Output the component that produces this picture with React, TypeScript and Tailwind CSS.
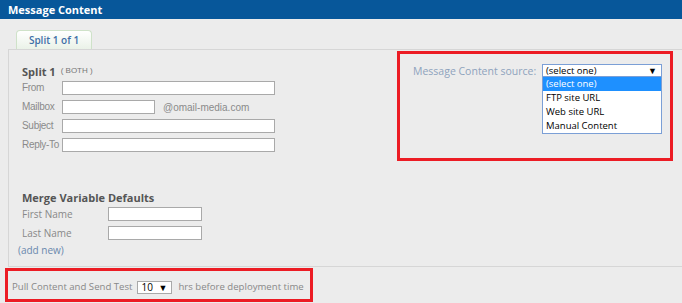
import React from "react";

const open = "font-['Open_Sans',sans-serif]";
const arial = "font-['Liberation_Sans',Arial,sans-serif]";

function Field({ label, wide = true, suffix }: { label: string; wide?: boolean; suffix?: string }) {
  return (
    <div className="flex items-center h-[14px]">
      <span className={`${arial} w-[40px] shrink-0 whitespace-nowrap text-[10px] tracking-[-0.3px] text-[#8a8a8a] leading-none`}>{label}</span>
      <input
        className={`h-[14px] shrink-0 ${wide ? "w-[213px]" : "w-[93px]"} bg-white border border-[#a9a9a9] outline-none`}
      />
      {suffix && <span className={`${arial} ml-[8px] whitespace-nowrap text-[10px] text-[#8a8a8a]`}>{suffix}</span>}
    </div>
  );
}

function MergeField({ label }: { label: string }) {
  return (
    <div className="flex items-center h-[14px]">
      <span className={`${open} w-[86px] shrink-0 text-[10px] text-[#888] leading-none`}>{label}</span>
      <input className="h-[14px] w-[94px] shrink-0 bg-white border border-[#a9a9a9] outline-none" />
    </div>
  );
}

export default function App() {
  return (
    <div className={`${open} w-[682px] h-[303px] bg-[#ececec] overflow-hidden`}>
      <div className="h-[19px] bg-[#07579a] flex items-center pl-[8px]">
        <span className="text-white text-[11px] font-bold leading-none">Message Content</span>
      </div>

      <div className="pt-[11px] pl-[16px] flex">
        <div className="w-[76px] h-[19px] rounded-t-[4px] border border-b-0 border-[#cfe2c9] bg-gradient-to-b from-white to-[#eaf2e8] flex items-center justify-center">
          <span className="text-[10px] font-semibold text-[#3e6fa7] leading-none">Split 1 of 1</span>
        </div>
      </div>

      <div className="ml-[8px] border-l border-t border-b border-[#d6d6d6] grid grid-cols-[300px_1fr]">
        <div className="pl-[13px] pt-[14px] pb-[10px]">
          <div className="h-[14px] flex items-center">
            <span className="text-[11px] font-bold text-[#555] leading-none">Split 1</span>
            <span className={`${arial} ml-[5px] text-[8px] text-[#777] leading-none`}>( BOTH )</span>
          </div>
          <div className="mt-[3px] flex flex-col gap-[5px]">
            <Field label="From" />
            <Field label="Mailbox" wide={false} suffix="@omail-media.com" />
            <Field label="Subject" />
            <Field label="Reply-To" />
          </div>
          <div className="mt-[38px] h-[14px] flex items-center">
            <span className="text-[11px] font-bold text-[#555] leading-none">Merge Variable Defaults</span>
          </div>
          <div className="mt-[3px] flex flex-col gap-[5px]">
            <MergeField label="First Name" />
            <MergeField label="Last Name" />
          </div>
          <div className="mt-[4px] -ml-[4px] h-[12px] flex items-center">
            <span className="text-[10px] text-[#6a88ad] leading-none">(add new)</span>
          </div>
        </div>

        <div className="pl-[88px] pr-[9px] pt-[1px]">
          <div className="h-[110px] border-[3px] border-[#ec1c24] pl-[13px] pr-[8px] pt-[10px] flex items-start justify-between">
            <span className="mt-[1px] whitespace-nowrap text-[10.5px] text-[#8ea3bd] leading-[12px]">Message Content source:</span>
            <div className="relative shrink-0 w-[120px]">
              <div className="w-[120px] h-[13px] border border-[#7b9fd6] bg-white flex items-center justify-between pl-[3px] pr-[4px]">
                <span className="text-[9.5px] text-black leading-none">(select one)</span>
                <span className="text-[9px] text-black leading-none">▼</span>
              </div>
              <div className="absolute left-0 top-[12px] w-[120px] border border-[#7b9fd6] bg-white flex flex-col">
                <div className="h-[14px] bg-[#1e90ff] text-white text-[9.5px] pl-[3px] flex items-center leading-none">(select one)</div>
                <div className="h-[14px] text-black text-[9.5px] pl-[3px] flex items-center leading-none">FTP site URL</div>
                <div className="h-[14px] text-black text-[9.5px] pl-[3px] flex items-center leading-none">Web site URL</div>
                <div className="h-[14px] text-black text-[9.5px] pl-[3px] flex items-center leading-none">Manual Content</div>
              </div>
            </div>
          </div>
        </div>
      </div>

      <div className="mt-[1px] ml-[5px] w-[308px] h-[34px] border-[3px] border-[#ec1c24] flex items-center pl-[4px] pt-[4px]">
        <span className="whitespace-nowrap shrink-0 text-[9.6px] text-[#888] leading-none">Pull Content and Send Test</span>
        <div className="ml-[5px] shrink-0 w-[35px] h-[13px] border border-[#a9a9a9] bg-white flex items-center justify-between pl-[3px] pr-[4px]">
          <span className="text-[10px] text-black leading-none">10</span>
          <span className="text-[9px] text-black leading-none">▼</span>
        </div>
        <span className="ml-[6px] whitespace-nowrap shrink-0 text-[9.6px] text-[#888] leading-none">hrs before deployment time</span>
      </div>
    </div>
  );
}
